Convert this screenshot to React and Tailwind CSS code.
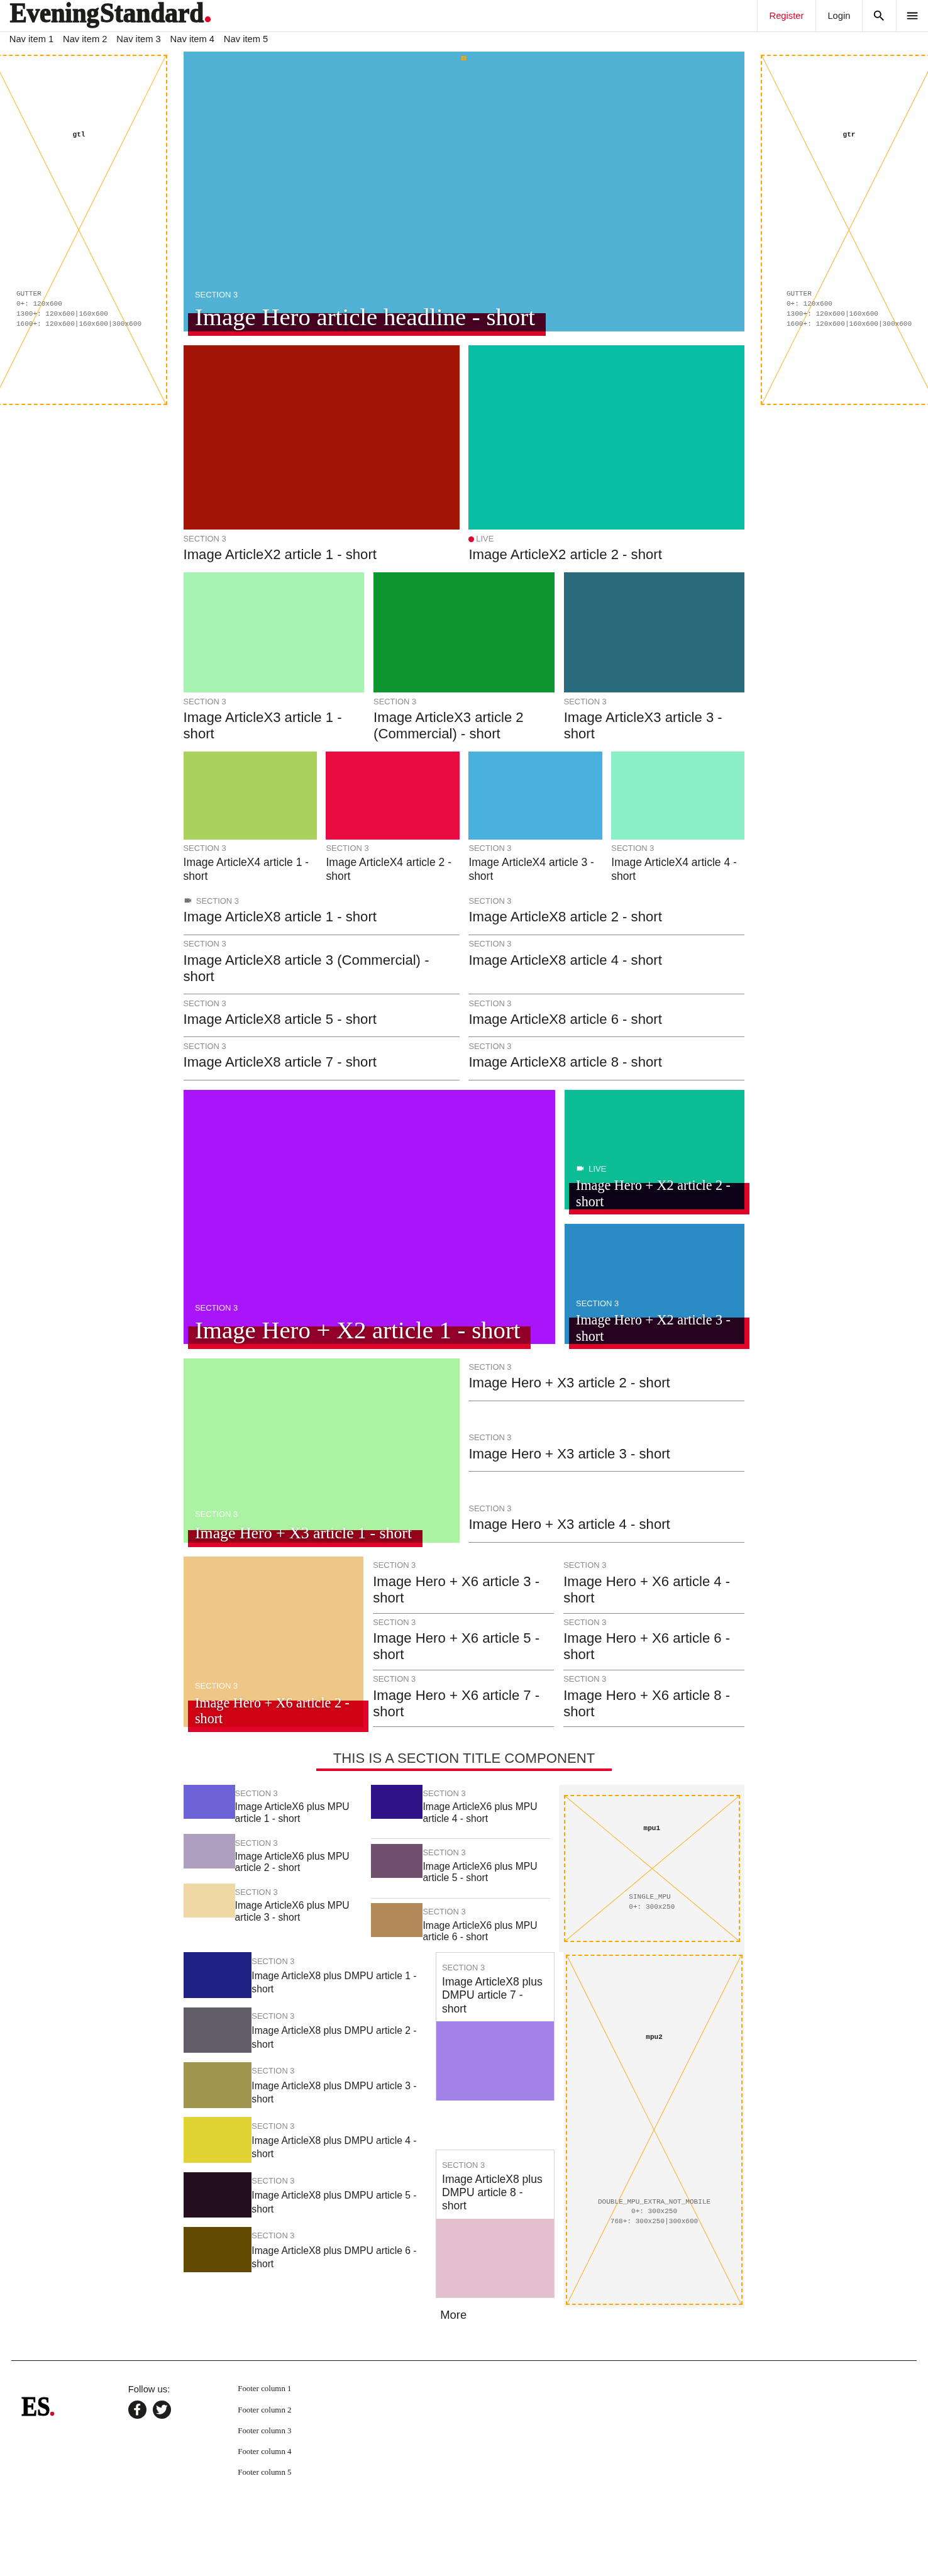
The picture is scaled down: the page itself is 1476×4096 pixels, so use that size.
import React from 'react';
import { MdMenu, MdSearch, MdVideocam } from 'react-icons/md';
import { FaFacebookF, FaTwitter } from 'react-icons/fa';

const SANS = "font-['Liberation_Sans',Arial,sans-serif]";
const SERIF = "font-['Liberation_Serif','Times_New_Roman',serif]";
const MONO = "font-['Liberation_Mono','Courier_New',monospace]";

function Label({ children = 'SECTION 3', video, live, light }) {
  return (
    <div
      className={`flex h-4 items-center text-[14px] leading-4 whitespace-nowrap ${
        light ? 'text-white/90' : 'text-[#8c8c8c]'
      }`}
    >
      {video && (
        <MdVideocam
          className={`-mt-[3px] mr-[7px] size-[15px] ${light ? 'text-white' : 'text-[#737373]'}`}
        />
      )}
      {live && <span className="mt-px mr-1 size-[9px] rounded-full bg-[#e3002b]" />}
      {children}
    </div>
  );
}

function Title({ children, className = 'text-[24px] leading-[28px]' }) {
  return <h3 className={`mt-[5px] text-[#1d1d1b] ${className}`}>{children}</h3>;
}

function Text({ title, titleClass, ...label }) {
  return (
    <div className="pt-2">
      <Label {...label} />
      <Title className={titleClass}>{title}</Title>
    </div>
  );
}

function Ruled({ title, className = 'pb-4', ...label }) {
  return (
    <article className={`border-b border-[#8c8c8c] ${className}`}>
      <Text title={title} {...label} />
    </article>
  );
}

const HERO_SIZES = {
  lg: ['text-[42px] leading-[48px]', 'top-[17px]'],
  md: ['text-[28px] leading-[34px]', 'top-[12px]'],
  sm: ['text-[24px] leading-[28px]', 'top-[10px]'],
};

function Hero({ title, size = 'lg', className, wide, ...label }) {
  const [text, top] = HERO_SIZES[size];
  return (
    <article className={`relative ${className}`}>
      <div className={`absolute -bottom-2 left-2 ${wide ? '-right-2' : ''}`}>
        <div className="mb-[6px] ml-3">
          <Label light {...label} />
        </div>
        <div className="relative pr-[18px] pb-2 pl-3">
          <div className={`absolute inset-x-0 bottom-0 bg-[#df0428] mix-blend-multiply ${top}`} />
          <h2
            className={`relative text-white [text-shadow:0_2px_5px_rgba(0,0,0,0.35)] ${SERIF} ${text}`}
          >
            {title}
          </h2>
        </div>
      </div>
    </article>
  );
}

function AdSlot({ name, lines, centered, className, titleClass, linesClass }) {
  return (
    <div
      className={`relative flex w-[304px] shrink-0 flex-col items-center border-[2.2px] border-dashed border-[#ffa500] text-[12px] leading-[17px] ${MONO} ${className}`}
    >
      <svg className="absolute inset-0 size-full" preserveAspectRatio="none" viewBox="0 0 100 100">
        <path
          d="M0 0L100 100M100 0L0 100"
          stroke="#ffa500"
          strokeOpacity="0.8"
          strokeWidth="1.2"
          vectorEffect="non-scaling-stroke"
        />
      </svg>
      <strong className={`relative text-[#1d1d1b] ${titleClass}`}>{name}</strong>
      <div
        className={`relative whitespace-pre text-[#6b6b6b] ${centered ? 'text-center' : ''} ${linesClass}`}
      >
        {lines.join('\n')}
      </div>
    </div>
  );
}

const GUTTER = ['GUTTER', '0+: 120x600', '1300+: 120x600|160x600', '1600+: 120x600|160x600|300x600'];

function Thumb({ color, title, size, titleClass }) {
  return (
    <article className="flex">
      <div className={`shrink-0 ${size} ${color}`} />
      <div className="min-w-0 flex-1">
        <Text title={title} titleClass={titleClass} />
      </div>
    </article>
  );
}

function Header() {
  const cell = 'flex items-center justify-center border-l border-[#e3e3e3]';
  return (
    <header className="flex h-[55px] justify-between border-b border-[#e3e3e3]">
      <svg
        className="h-[54px] w-[380px] overflow-visible"
        viewBox="0 0 380 54"
        fontFamily="Liberation Serif"
        fontWeight="700"
        fontSize="48"
        fill="#1d1d1b"
        stroke="#1d1d1b"
        strokeWidth="1.5"
      >
        <text x="17" y="38" textLength="154" lengthAdjust="spacingAndGlyphs">
          Evening
        </text>
        <text x="172.5" y="38" textLength="179" lengthAdjust="spacingAndGlyphs">
          Standard
        </text>
        <circle cx="358.3" cy="33.3" r="5" fill="#e3002b" stroke="none" />
      </svg>
      <div className="flex text-[16px] text-[#1d1d1b]">
        <a className={`w-[101px] text-[#df0428] ${cell}`}>Register</a>
        <a className={`w-[80px] ${cell}`}>Login</a>
        <a className={`w-[59px] text-black ${cell}`}>
          <MdSearch className="size-6" />
        </a>
        <a className={`w-[55px] pr-px text-black ${cell}`}>
          <MdMenu className="size-6" />
        </a>
      </div>
    </header>
  );
}

const X2 = [
  ['bg-[#a31507]', {}],
  ['bg-[#08bea5]', { live: true, children: 'LIVE' }],
];
const X3 = [
  ['bg-[#a6f2b1]', 'Image ArticleX3 article 1 - short'],
  ['bg-[#0d952f]', 'Image ArticleX3 article 2 (Commercial) - short'],
  ['bg-[#296a7d]', 'Image ArticleX3 article 3 - short'],
];
const X4 = ['bg-[#a8d15d]', 'bg-[#ea0b41]', 'bg-[#4ab1de]', 'bg-[#8bf0c5]'];
const X6_LEFT = ['bg-[#6b63d6]', 'bg-[#ae9fbf]', 'bg-[#efd8a5]'];
const X6_RIGHT = ['bg-[#301289]', 'bg-[#70506f]', 'bg-[#b28a58]'];
const X8 = [
  'bg-[#202184]',
  'bg-[#605d69]',
  'bg-[#a09650]',
  'bg-[#e2d335]',
  'bg-[#230f1f]',
  'bg-[#634a03]',
];
const CARDS = [
  ['bg-[#a382e8]', 7],
  ['bg-[#e4bfcd]', 8],
];

function Main() {
  return (
    <main className="w-[968px]">
      <div className="relative">
        <Hero
          className="h-[482px] bg-[#52b2d6]"
          title="Image Hero article headline - short"
        />
        <svg className="absolute top-[7px] left-[480px] size-2" viewBox="0 0 8 8">
          <rect width="8" height="8" fill="#ffa500" />
          <circle cx="4" cy="4" r="1.5" fill="none" stroke="#52b2d6" strokeWidth="1" />
        </svg>
      </div>

      <section className="mt-6 grid grid-cols-2 gap-4">
        {X2.map(([color, label], i) => (
          <article key={color}>
            <div className={`h-[318px] ${color}`} />
            <Text title={`Image ArticleX2 article ${i + 1} - short`} {...label} />
          </article>
        ))}
      </section>

      <section className="mt-4 grid grid-cols-3 gap-4">
        {X3.map(([color, title]) => (
          <article key={color}>
            <div className={`h-[208px] ${color}`} />
            <Text title={title} />
          </article>
        ))}
      </section>

      <section className="mt-4 grid grid-cols-4 gap-4">
        {X4.map((color, i) => (
          <article key={color}>
            <div className={`h-[152px] ${color}`} />
            <Text
              title={`Image ArticleX4 article ${i + 1} - short`}
              titleClass="text-[19px] leading-[23px]"
            />
          </article>
        ))}
      </section>

      <section className="mt-4 grid grid-cols-2 gap-x-4">
        {[1, 2, 3, 4, 5, 6, 7, 8].map((n) => (
          <Ruled
            key={n}
            video={n === 1}
            title={`Image ArticleX8 article ${n}${n === 3 ? ' (Commercial)' : ''} - short`}
          />
        ))}
      </section>

      <section className="mt-4 flex justify-between">
        <Hero
          className="h-[439px] w-[641px] bg-[#a914fb]"
          title="Image Hero + X2 article 1 - short"
        />
        <div className="flex w-[311px] flex-col gap-6">
          <Hero
            size="sm"
            wide
            video
            className="h-[207px] bg-[#0dbd95]"
            title="Image Hero + X2 article 2 - short"
          >
            LIVE
          </Hero>
          <Hero
            size="sm"
            wide
            className="h-[208px] bg-[#2b8bc5]"
            title="Image Hero + X2 article 3 - short"
          />
        </div>
      </section>

      <section className="mt-6 grid grid-cols-2 gap-4">
        <Hero
          size="md"
          className="h-[318px] bg-[#abf3a2]"
          title="Image Hero + X3 article 1 - short"
        />
        <div className="flex flex-col justify-between">
          {[2, 3, 4].map((n) => (
            <Ruled key={n} title={`Image Hero + X3 article ${n} - short`} />
          ))}
        </div>
      </section>

      <section className="mt-6 flex gap-4">
        <Hero
          size="sm"
          wide
          className="h-[294px] w-[311px] shrink-0 bg-[#eec685]"
          title="Image Hero + X6 article 2 - short"
        />
        <div className="grid flex-1 grid-cols-2 gap-x-4">
          {[3, 4, 5, 6, 7, 8].map((n) => (
            <Ruled key={n} className="pb-3" title={`Image Hero + X6 article ${n} - short`} />
          ))}
        </div>
      </section>

      <h2 className="mx-auto mt-[37px] h-[38px] w-[510px] border-b-[4.4px] border-[#e3002b] text-center text-[24px] leading-[32px] whitespace-nowrap text-[#3c3c3b]">
        THIS IS A SECTION TITLE COMPONENT
      </h2>

      <section className="mt-6 flex h-[289px]">
        <div className="flex w-[324px] flex-col">
          {X6_LEFT.map((color, i) => (
            <div key={color} className="h-[85px] pr-4">
              <Thumb
                color={color}
                size="h-[59px] w-[89px]"
                title={`Image ArticleX6 plus MPU article ${i + 1} - short`}
                titleClass="mt-[4px] text-[17px] leading-[20px]"
              />
            </div>
          ))}
        </div>
        <div className="w-[308px]">
          {X6_RIGHT.map((color, i) => (
            <div
              key={color}
              className={i < 2 ? 'mb-2 h-[94px] border-b border-[#d3d3d3]' : 'h-[85px]'}
            >
              <Thumb
                color={color}
                size="h-[59px] w-[89px]"
                title={`Image ArticleX6 plus MPU article ${i + 4} - short`}
                titleClass="mt-[4px] text-[17px] leading-[20px]"
              />
            </div>
          ))}
        </div>
        <aside className="ml-4 flex w-[320px] items-center justify-center bg-[#f4f4f4]">
          <AdSlot
            name="mpu1"
            lines={['SINGLE_MPU', '0+: 300x250']}
            className="h-[254px]"
            titleClass="mt-[48px]"
            linesClass="mt-[101px]"
          />
        </aside>
      </section>

      <section className="flex h-[612px]">
        <div className="flex w-[435px] flex-col gap-4 pr-4">
          {X8.map((color, i) => (
            <div key={color} className="h-[78.66px]">
              <Thumb
                color={color}
                size="h-[78.66px] w-[118px]"
                title={`Image ArticleX8 plus DMPU article ${i + 1} - short`}
                titleClass="text-[17px] leading-[23px]"
              />
            </div>
          ))}
        </div>
        <div className="flex w-[205px] flex-col gap-[84px]">
          {CARDS.map(([color, n]) => (
            <article key={n} className="h-[256px] border border-[#d3d3d3]">
              <div className="h-[118px] px-[10px] pt-[10px]">
                <Text
                  title={`Image ArticleX8 plus DMPU article ${n} - short`}
                  titleClass="text-[19px] leading-[23px]"
                />
              </div>
              <div className={`h-[136px] ${color}`} />
            </article>
          ))}
        </div>
        <aside className="ml-4 w-[312px] bg-[#f4f4f4] p-1">
          <AdSlot
            name="mpu2"
            centered
            lines={['DOUBLE_MPU_EXTRA_NOT_MOBILE', '0+: 300x250', '768+: 300x250|300x600']}
            className="h-[604px]"
            titleClass="mt-[132px]"
            linesClass="mt-[267px]"
          />
        </aside>
      </section>

      <a className="mt-[1px] ml-[443px] block text-[20px] leading-[24px] text-[#1d1d1b]">More</a>
    </main>
  );
}

function Footer() {
  const circle =
    'flex size-8 items-center justify-center rounded-full bg-[#1d1d1b] text-white';
  return (
    <footer className="mx-5 mt-[66px] flex border-t border-[#1d1d1b]">
      <svg className="mt-[45px] h-[66px] w-[201px]" viewBox="0 0 201 66">
        <text
          x="17.5"
          y="50"
          fontFamily="Liberation Serif"
          fontWeight="700"
          fontSize="47"
          fill="#000"
          stroke="#000"
          strokeWidth="1.2"
          textLength="49.5"
          lengthAdjust="spacingAndGlyphs"
        >
          ES
        </text>
        <circle cx="70.5" cy="46.7" r="3.6" fill="#c8102e" />
      </svg>
      <div className="w-[189px] pt-[39px] text-[16px] leading-[20px] text-[#1d1d1b]">
        Follow us:
        <div className="mt-[9px] flex gap-[10px]">
          <a className={circle}>
            <FaFacebookF className="size-5" />
          </a>
          <a className={circle}>
            <FaTwitter className="size-5" />
          </a>
        </div>
      </div>
      <ul className={`pt-[30px] text-[14px] leading-[36px] text-[#1d1d1b] ${SERIF}`}>
        {[1, 2, 3, 4, 5].map((n) => (
          <li key={n}>Footer column {n}</li>
        ))}
      </ul>
    </footer>
  );
}

export default function App() {
  return (
    <div
      className={`h-[4440px] w-[1600px] overflow-hidden bg-white text-[#1d1d1b] [zoom:0.9225] ${SANS}`}
    >
      <Header />
      <nav className="flex h-[34px] gap-4 pl-4 text-[16px] leading-[26px]">
        {[1, 2, 3, 4, 5].map((n) => (
          <a key={n}>Nav item {n}</a>
        ))}
      </nav>
      <div className="-mx-4 flex justify-between">
        <AdSlot
          name="gtl"
          lines={GUTTER}
          className="mt-[5px] h-[604px]"
          titleClass="mt-[128px]"
          linesClass="mt-[258px]"
        />
        <Main />
        <AdSlot
          name="gtr"
          lines={GUTTER}
          className="mt-[5px] h-[604px]"
          titleClass="mt-[128px]"
          linesClass="mt-[258px]"
        />
      </div>
      <Footer />
    </div>
  );
}
